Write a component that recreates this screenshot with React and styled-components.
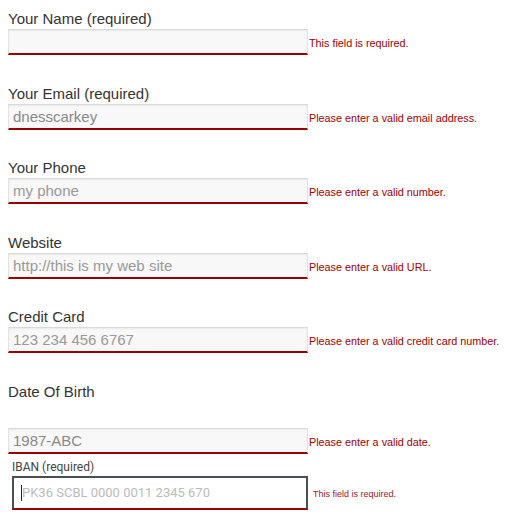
import React from "react";
import styled, { createGlobalStyle } from "styled-components";

const Global = createGlobalStyle`
  html, body { margin: 0; padding: 0; background: #fff; }
  body { font-family: "Liberation Sans", Arial, sans-serif; }
`;

const Form = styled.form`
  padding: 8px 8px 0 8px;
  width: 516px;
  box-sizing: border-box;
`;

const Group = styled.div`
  margin-bottom: ${(p) => p.$gap ?? 27.5}px;
`;

const Label = styled.label`
  display: block;
  font-size: 15px;
  line-height: 21px;
  color: #333;
  margin-bottom: ${(p) => p.$after ?? 0}px;
`;

const Row = styled.div`
  display: flex;
  align-items: center;
`;

const Input = styled.input`
  box-sizing: border-box;
  width: 300px;
  height: 26px;
  margin: 0;
  padding: 0 4px;
  font-family: "Liberation Sans", Arial, sans-serif;
  font-size: 15px;
  color: #888;
  background: #f8f8f8;
  border: 1px solid #e3e3e3;
  border-top-color: #d9d9d9;
  border-bottom: 2px solid #990000;
  border-radius: 0;
  box-shadow: inset 0 1px 2px rgba(0, 0, 0, 0.06);
  outline: none;
  &::placeholder { color: #999; }
`;

const Error = styled.span`
  font-size: 10.8px;
  color: #a00000;
  padding-left: 1px;
  margin-top: 2px;
`;

const IbanGroup = styled.div`
  padding-left: 4px;
  margin-top: 5px;
`;

const IbanLabel = styled.label`
  display: block;
  font-family: Roboto, "Liberation Sans", sans-serif;
  font-weight: 400;
  font-size: 12px;
  line-height: 16px;
  color: #444;
  margin-bottom: 1px;
`;

const IbanBox = styled.div`
  position: relative;
  width: 296px;
`;

const IbanInput = styled.input`
  box-sizing: border-box;
  width: 296px;
  height: 34px;
  margin: 0;
  padding: 0 8px;
  font-family: Roboto, "Liberation Sans", sans-serif;
  font-size: 13px;
  color: #555;
  background: #fff;
  border: 2px solid #4a4f55;
  border-bottom-color: #990000;
  border-radius: 0;
  outline: none;
  &::placeholder { color: #bbb; }
`;

const Caret = styled.span`
  position: absolute;
  left: 9px;
  top: 9px;
  width: 1px;
  height: 16px;
  background: #222;
`;

const SmallError = styled.span`
  font-size: 9px;
  color: #a02020;
  padding-left: 5px;
  margin-top: 2px;
`;

const fields = [
  { label: "Your Name (required)", value: "", placeholder: "", error: "This field is required." },
  { label: "Your Email (required)", value: "dnesscarkey", error: "Please enter a valid email address." },
  { label: "Your Phone", placeholder: "my phone", error: "Please enter a valid number." },
  { label: "Website", placeholder: "http://this is my web site", error: "Please enter a valid URL." },
  { label: "Credit Card", placeholder: "123 234 456 6767", error: "Please enter a valid credit card number." },
  { label: "Date Of Birth", value: "1987-ABC", error: "Please enter a valid date.", after: 26, gap: 0 },
];

export default function App() {
  return (
    <>
      <Global />
      <Form onSubmit={(e) => e.preventDefault()}>
        {fields.map((f) => (
          <Group key={f.label} $gap={f.gap}>
            <Label $after={f.after}>{f.label}</Label>
            <Row>
              <Input
                defaultValue={f.value}
                placeholder={f.placeholder}
                readOnly
              />
              <Error>{f.error}</Error>
            </Row>
          </Group>
        ))}
        <IbanGroup>
          <IbanLabel>IBAN (required)</IbanLabel>
          <Row>
            <IbanBox>
              <IbanInput placeholder="PK36 SCBL 0000 0011 2345 670" readOnly />
              <Caret />
            </IbanBox>
            <SmallError>This field is required.</SmallError>
          </Row>
        </IbanGroup>
      </Form>
    </>
  );
}
